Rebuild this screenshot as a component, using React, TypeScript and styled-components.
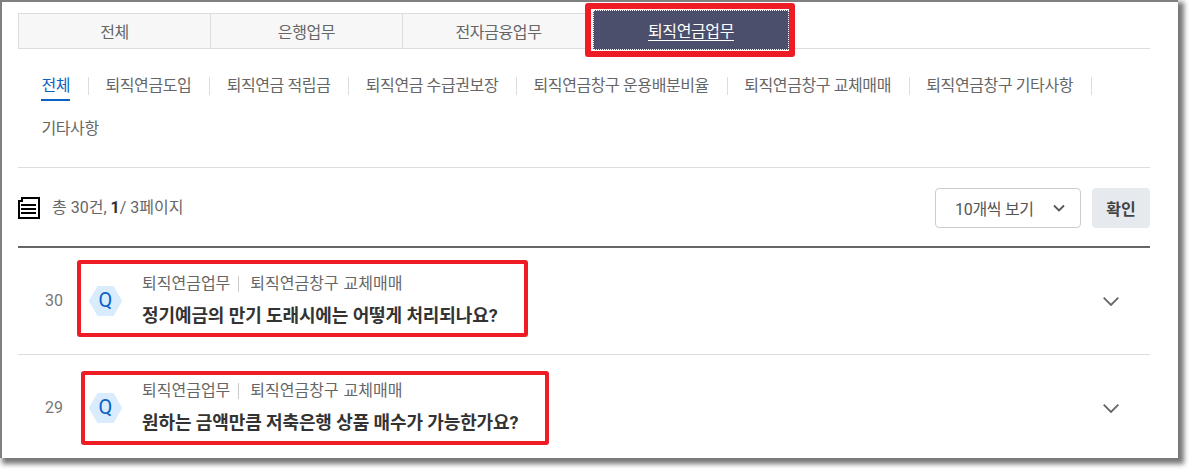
import React from 'react'
import styled, { createGlobalStyle } from 'styled-components'

const GlobalStyle = createGlobalStyle`
  html, body {
    width: 1189px;
    height: 469px;
    margin: 0;
    padding: 0;
    overflow: hidden;
    background: #fff;
  }
  #root {
    width: 1189px;
    height: 469px;
  }
  * {
    box-sizing: border-box;
  }
`

const Shadow = styled.div`
  width: 1178px;
  height: 458px;
  box-shadow: 4px 4px 5px 2px #777;
`

const Frame = styled.div`
  position: relative;
  width: 1178px;
  height: 458px;
  padding: 11px 28px 0 16px;
  overflow: hidden;
  background: #fff;
  border-top: 2px solid #808080;
  border-left: 2px solid #808080;
  font-family: Roboto, 'Noto Sans CJK KR', sans-serif;
  color: #666;
`

const Tabs = styled.ul`
  display: flex;
  height: 36px;
  margin: 0;
  padding: 0;
  list-style: none;
  border-bottom: 1px solid #ddd;
`

const Tab = styled.li<{ $active?: boolean }>`
  position: relative;
  display: flex;
  align-items: center;
  justify-content: center;
  width: ${({ $active }) => ($active ? '196px' : '192px')};
  height: ${({ $active }) => ($active ? '40px' : '35px')};
  margin: ${({ $active }) => ($active ? '-3px 0 0 -1px' : '0')};
  font-size: 16px;
  letter-spacing: -0.4px;
  color: ${({ $active }) => ($active ? '#fff' : '#666')};
  background: ${({ $active }) => ($active ? '#4c4f6b' : '#f7f7f7')};
  border: ${({ $active }) => ($active ? '0' : '1px solid #ddd')};
  border-bottom: 0;
  border-right: 0;
  outline: ${({ $active }) => ($active ? '1px dotted #fff' : '0')};
  outline-offset: -1px;
  text-decoration: ${({ $active }) => ($active ? 'underline' : 'none')};
  text-underline-offset: 3px;
`

const SubNav = styled.ul`
  display: flex;
  flex-wrap: wrap;
  align-content: flex-start;
  height: 119px;
  margin: 0;
  padding: 16px 0 0 7.2px;
  list-style: none;
  border-bottom: 1px solid #ddd;
`

const SubItem = styled.li`
  display: flex;
  align-items: center;
  height: 43px;
  padding-left: 16.3px;
`

const SubLabel = styled.span<{ $active?: boolean }>`
  display: block;
  font-size: 16px;
  line-height: 26px;
  letter-spacing: -0.4px;
  color: ${({ $active }) => ($active ? '#0a62c4' : '#666')};
  border-bottom: 2px solid ${({ $active }) => ($active ? '#0a62c4' : 'transparent')};
`

const SubSep = styled.i`
  display: block;
  width: 1px;
  height: 18px;
  margin: 0 0 2px 18px;
  background: #ddd;
`

const Summary = styled.div`
  display: flex;
  align-items: center;
  height: 80px;
  padding-top: 2px;
  border-bottom: 2px solid #666;
`

const ListGlyph = styled.svg`
  flex: none;
  width: 22px;
  height: 22px;
`

const Count = styled.p`
  flex: 1;
  margin: 0 0 4px 12px;
  font-size: 16px;
  color: #666;

  b {
    color: #333;
    font-weight: 700;
  }
`

const SelectBox = styled.div`
  display: flex;
  align-items: center;
  justify-content: space-between;
  width: 146px;
  height: 40px;
  padding: 0 15px 0 19px;
  border: 1px solid #ccc;
  border-radius: 4px;
  font-size: 16px;
  letter-spacing: -0.3px;
  color: #555;
`

const ConfirmButton = styled.button`
  width: 58px;
  height: 40px;
  margin-left: 11px;
  border: 0;
  border-radius: 4px;
  background: #e6e9ee;
  font: 700 16px Roboto, 'Noto Sans CJK KR', sans-serif;
  color: #444;
`

const Row = styled.div`
  position: relative;
  display: flex;
  align-items: center;
  height: 106px;
  padding-left: 27px;
`

const RowLine = styled.div`
  height: 1px;
  background: #ddd;
`

const Num = styled.span`
  width: 44px;
  margin-bottom: 2px;
  font-size: 16px;
  color: #777;
`

const Hexagon = styled.svg`
  flex: none;
  width: 33px;
  height: 30px;
`

const RowBody = styled.div`
  flex: 1;
  margin-left: 20px;
`

const Meta = styled.div`
  display: flex;
  align-items: center;
  font-size: 16px;
  line-height: 22px;
  word-spacing: 1px;
  color: #666;
`

const MetaSep = styled.i`
  display: block;
  width: 1px;
  height: 16px;
  margin: 0 11px 0 8px;
  background: #ccc;
`

const Title = styled.div`
  margin-top: 8px;
  font-size: 18px;
  line-height: 26px;
  font-weight: 700;
  letter-spacing: -0.1px;
  color: #333;
`

const RowChevron = styled.svg`
  flex: none;
  width: 16px;
  height: 9px;
  margin-right: 31px;
`

const Marker = styled.div<{ $left: number; $top: number; $width: number; $height: number; $thick?: number }>`
  position: absolute;
  left: ${({ $left }) => $left}px;
  top: ${({ $top }) => $top}px;
  width: ${({ $width }) => $width}px;
  height: ${({ $height }) => $height}px;
  border: ${({ $thick }) => $thick ?? 4}px solid #ee1c25;
  border-radius: 3px;
  pointer-events: none;
`

const ListIcon = () => (
  <ListGlyph viewBox="0 0 22 22" shapeRendering="crispEdges">
    <path fillRule="evenodd" d="M3 0h19v22H0V3h3zM5 2v3H2v15h18V2z" fill="#000" />
    <path d="M3 7h15v2H3zM3 11h15v2H3zM3 15h15v2H3z" fill="#000" />
  </ListGlyph>
)

const SmallChevron = () => (
  <svg width="12" height="8" viewBox="0 0 12 8" fill="none">
    <path d="M1 1.500l5 5 5-5" stroke="#555" strokeWidth="1.800" />
  </svg>
)

const QBadge = () => (
  <Hexagon viewBox="0 0 33 30">
    <path d="M9 1h15l8 14-8 14H9L1 15z" fill="#d9ecfd" stroke="#d9ecfd" strokeWidth="2" strokeLinejoin="round" />
    <text x="16.500" y="21" textAnchor="middle" fontSize="20" fontFamily="Roboto, sans-serif" fill="#0a62c4">
      Q
    </text>
  </Hexagon>
)

const subItems = [
  '전체',
  '퇴직연금도입',
  '퇴직연금 적립금',
  '퇴직연금 수급권보장',
  '퇴직연금창구 운용배분비율',
  '퇴직연금창구 교체매매',
  '퇴직연금창구 기타사항'
]

const rows = [
  {
    num: 30,
    title: '정기예금의 만기 도래시에는 어떻게 처리되나요?',
    marker: { $left: 59, $top: 12, $width: 451, $height: 77 }
  },
  {
    num: 29,
    title: '원하는 금액만큼 저축은행 상품 매수가 가능한가요?',
    marker: { $left: 63, $top: 16, $width: 468, $height: 74 }
  }
]

export default function App() {
  return (
    <>
      <GlobalStyle />
      <Shadow>
        <Frame>
          <Tabs>
            <Tab>전체</Tab>
            <Tab>은행업무</Tab>
            <Tab>전자금융업무</Tab>
            <Tab $active>
              퇴직연금업무
              <Marker $left={-8} $top={-7} $width={210} $height={54} $thick={6} />
            </Tab>
          </Tabs>
          <SubNav>
            {subItems.map((item, i) => (
              <SubItem key={item}>
                <SubLabel $active={i === 0}>{item}</SubLabel>
                <SubSep />
              </SubItem>
            ))}
            <SubItem>
              <SubLabel>기타사항</SubLabel>
            </SubItem>
          </SubNav>
          <Summary>
            <ListIcon />
            <Count>
              총 30건, <b>1</b>/ 3페이지
            </Count>
            <SelectBox>
              10개씩 보기
              <SmallChevron />
            </SelectBox>
            <ConfirmButton>확인</ConfirmButton>
          </Summary>
          {rows.map((row, i) => (
            <React.Fragment key={row.num}>
              {i > 0 && <RowLine />}
              <Row>
                <Num>{row.num}</Num>
                <QBadge />
                <RowBody>
                  <Meta>
                    퇴직연금업무
                    <MetaSep />
                    퇴직연금창구 교체매매
                  </Meta>
                  <Title>{row.title}</Title>
                </RowBody>
                <RowChevron viewBox="0 0 16 9" fill="none">
                  <path d="M.7.7L8 8l7.300-7.300" stroke="#666" strokeWidth="1.800" />
                </RowChevron>
                <Marker {...row.marker} />
              </Row>
            </React.Fragment>
          ))}
        </Frame>
      </Shadow>
    </>
  )
}
